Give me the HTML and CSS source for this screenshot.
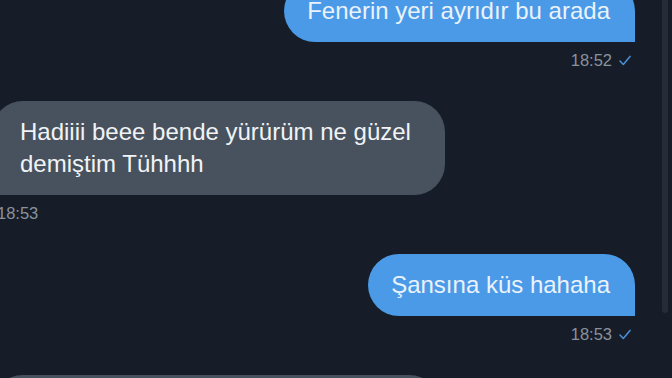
FILE: index.html
```html
<!DOCTYPE html>
<html lang="tr">
<head>
  <meta charset="UTF-8">
  <title>Mesajlar</title>
  <link rel="stylesheet" href="styles.css">
</head>
<body>

  <!-- sohbet akışı -->
  <div class="chat">

    <div class="msg out first">
      <div class="bubble">Fenerin yeri ayrıdır bu arada</div>
      <div class="meta">
        <span>18:52</span>
        <svg class="check" width="12" height="11" viewBox="0 0 12 11"><path d="M1 6 L4.3 9.4 L11 1.4" fill="none" stroke="#4a8fd8" stroke-width="1.5" stroke-linecap="round" stroke-linejoin="round"/></svg>
      </div>
    </div>

    <div class="msg in">
      <div class="bubble">Hadiiii beee bende yürürüm ne güzel demiştim Tühhhh</div>
      <div class="meta"><span>18:53</span></div>
    </div>

    <div class="msg out">
      <div class="bubble">Şansına küs hahaha</div>
      <div class="meta">
        <span>18:53</span>
        <svg class="check" width="12" height="11" viewBox="0 0 12 11"><path d="M1 6 L4.3 9.4 L11 1.4" fill="none" stroke="#4a8fd8" stroke-width="1.5" stroke-linecap="round" stroke-linejoin="round"/></svg>
      </div>
    </div>

    <div class="msg in">
      <div class="bubble empty"></div>
    </div>

  </div>

  <!-- kaydırma çubuğu -->
  <div class="scrollbar"></div>

</body>
</html>
```

FILE: styles.css
```css
body {
  margin: 0;
  height: 378px;
  overflow: hidden;
  background-color: #161d28;
  font-family: "Liberation Sans", Arial, sans-serif;
}

.chat {
  display: flex;
  flex-direction: column;
  padding-right: 37px;
}

.msg {
  display: flex;
  flex-direction: column;
  margin-bottom: 31px;
}

.msg.first {
  margin-top: -20px;
}

.bubble {
  font-size: 24px;
  line-height: 32px;
  padding: 15px 25px 15px 23px;
  border-radius: 31px;
}

/* 🔹giden mesaj */
.msg.out {
  align-self: flex-end;
  align-items: flex-end;
}

.msg.out .bubble {
  background-color: #4b9ae8;
  color: #eaf2fb;
  border-bottom-right-radius: 0;
}

.msg.out .meta {
  padding-right: 4px;
}

/* 🔹gelen mesaj */
.msg.in {
  align-self: flex-start;
  align-items: flex-start;
  margin-left: -8px;
}

.msg.in .bubble {
  background-color: #48525f;
  color: #f1f3f5;
  max-width: 453px;
  box-sizing: border-box;
  padding: 15px 28px 15px 28px;
  border-bottom-left-radius: 0;
}

.msg.in .meta {
  padding-left: 5px;
}

.bubble.empty {
  width: 448px;
  height: 62px;
}

.meta {
  display: flex;
  align-items: center;
  gap: 7px;
  margin-top: 8px;
  height: 20px;
  font-size: 16.5px;
  color: #8a929d;
}

.scrollbar {
  position: absolute;
  top: 0;
  left: 662px;
  width: 6px;
  height: 313px;
  border-radius: 0 0 3px 3px;
  background-color: #252c37;
}
```
